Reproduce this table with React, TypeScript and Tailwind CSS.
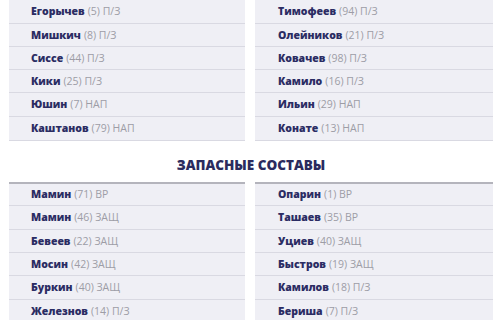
import React from "react";

type P = { n: string; num: string; pos: string };

const topLeft: P[] = [
  { n: "Егорычев", num: "5", pos: "П/З" },
  { n: "Мишкич", num: "8", pos: "П/З" },
  { n: "Сиссе", num: "44", pos: "П/З" },
  { n: "Кики", num: "25", pos: "П/З" },
  { n: "Юшин", num: "7", pos: "НАП" },
  { n: "Каштанов", num: "79", pos: "НАП" },
];
const topRight: P[] = [
  { n: "Тимофеев", num: "94", pos: "П/З" },
  { n: "Олейников", num: "21", pos: "П/З" },
  { n: "Ковачев", num: "98", pos: "П/З" },
  { n: "Камило", num: "16", pos: "П/З" },
  { n: "Ильин", num: "29", pos: "НАП" },
  { n: "Конате", num: "13", pos: "НАП" },
];
const botLeft: P[] = [
  { n: "Мамин", num: "71", pos: "ВР" },
  { n: "Мамин", num: "46", pos: "ЗАЩ" },
  { n: "Бевеев", num: "22", pos: "ЗАЩ" },
  { n: "Мосин", num: "42", pos: "ЗАЩ" },
  { n: "Буркин", num: "40", pos: "ЗАЩ" },
  { n: "Железнов", num: "14", pos: "П/З" },
];
const botRight: P[] = [
  { n: "Опарин", num: "1", pos: "ВР" },
  { n: "Ташаев", num: "35", pos: "ВР" },
  { n: "Уциев", num: "40", pos: "ЗАЩ" },
  { n: "Быстров", num: "19", pos: "ЗАЩ" },
  { n: "Камилов", num: "18", pos: "П/З" },
  { n: "Бериша", num: "7", pos: "П/З" },
];

const topH = [24, 23, 23, 23, 24, 24];
const botH = [22, 24, 23, 23, 24, 24];

function Row({ p, h, padL }: { p: P; h: number; padL: string }) {
  return (
    <div
      className={`flex items-center border-b border-[#d9d9e2] bg-[#efeff5] ${padL} text-[10.5px] leading-none whitespace-nowrap`}
      style={{ height: h }}
    >
      <span className="font-extrabold text-[#2b2c63]">{p.n}</span>
      <span className="ml-[3px] text-[#9d9da6]">({p.num}) {p.pos}</span>
    </div>
  );
}

function Col({ list, hs, padL }: { list: P[]; hs: number[]; padL: string }) {
  return (
    <div className="flex flex-col">
      {list.map((p, i) => (
        <Row key={i} p={p} h={hs[i]} padL={padL} />
      ))}
    </div>
  );
}

export default function App() {
  return (
    <div
      className="w-[500px] h-[320px] overflow-hidden bg-white"
      style={{ fontFamily: '"Open Sans", "Liberation Sans", sans-serif' }}
    >
      <div className="grid grid-cols-[236px_238px] gap-x-[10px] pl-[9px]">
        <Col list={topLeft} hs={topH} padL="pl-[22px]" />
        <Col list={topRight} hs={topH} padL="pl-[23px]" />
      </div>
      <div className="flex h-[41px] items-center justify-center pl-[2px] pt-[9px] text-[13.5px] leading-none font-extrabold text-[#2b2b5e]">
        ЗАПАСНЫЕ СОСТАВЫ
      </div>
      <div className="grid grid-cols-[236px_238px] gap-x-[10px] pl-[9px]">
        <div className="border-t-2 border-[#b4b4bc]">
          <Col list={botLeft} hs={botH} padL="pl-[22px]" />
        </div>
        <div className="border-t-2 border-[#b4b4bc]">
          <Col list={botRight} hs={botH} padL="pl-[23px]" />
        </div>
      </div>
    </div>
  );
}
